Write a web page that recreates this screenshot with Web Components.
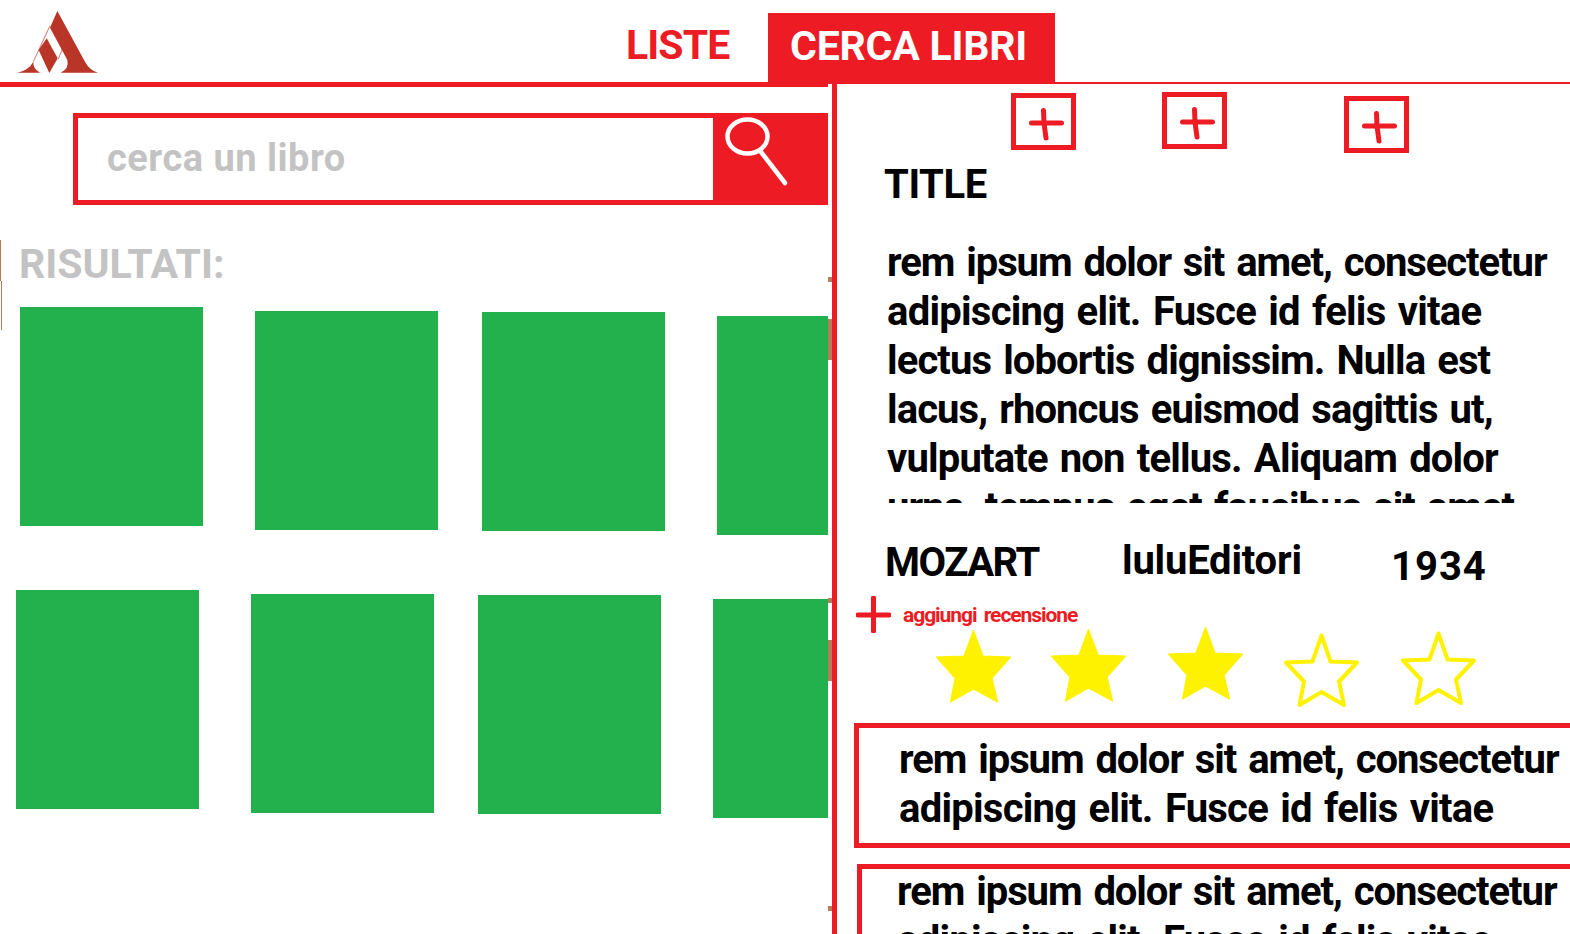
<!DOCTYPE html>
<html lang="it">
<head>
<meta charset="utf-8">
<title>Cerca libri</title>
<style>
  html, body { margin: 0; height: 100%; overflow: hidden; background: #fff; }
  body { font-family: Roboto, "Liberation Sans", sans-serif; }
</style>
</head>
<body>
<book-app></book-app>

<script>
(function () {
  const RED = "#ed1c24";
  const GREEN = "#22b14c";
  const BROWN = "#b97a57";
  const GREY = "#c3c3c3";

  function define(name, css, html, setup) {
    customElements.define(name, class extends HTMLElement {
      constructor() {
        super();
        this.attachShadow({ mode: "open" });
      }
      connectedCallback() {
        this.shadowRoot.innerHTML = `<style>${css}</style>${typeof html === "function" ? html(this) : html}`;
        if (setup) setup(this);
      }
    });
  }

  // each line has its own tracking, the source font is narrower than Roboto
  function lines(list) {
    return list.map(([text, ls]) => `<div style="letter-spacing:${ls}px">${text}</div>`).join("");
  }

  define("app-header", `
    :host { display: flex; height: 82px; flex: none; }
    svg { display: block; width: 95px; height: 75px; margin: 5px 0 0 10px; flex: none; }
    .liste { margin: 0 0 0 521px; width: 142px; color: ${RED}; font: 700 41px/91px Roboto, sans-serif; letter-spacing: -0.9px; flex: none; }
    .tab { margin-top: 13px; width: 265px; height: 69px; padding-left: 22px; background: ${RED}; color: #fff; font: 700 41px/66px Roboto, sans-serif; letter-spacing: -0.2px; white-space: nowrap; flex: none; }
  `, `
    <svg viewBox="0 0 285 225" aria-label="logo">
      <g fill="#b83527">
        <path d="M142 18 L225 170 Q238 195 264 203 H152 Q178 192 172 165 L120 68 Z"/>
        <path d="M110 100 L143 160 L118 204 L86 135 Z"/>
        <path d="M22 203 Q56 196 70 170 Q68 190 90 203 Z"/>
      </g>
      <path d="M120 62 L70 170 M157 132 L145 162" stroke="#b83527" stroke-width="2" fill="none"/>
    </svg>
    <div class="liste">LISTE</div>
    <div class="tab">CERCA LIBRI</div>
  `);

  define("header-rule", `
    :host { display: flex; height: 5px; flex: none; }
    .thick { width: 828px; background: ${RED}; flex: none; }
    .thin { flex: 1; height: 2px; background: ${RED}; }
    .stub { width: 5px; height: 3px; margin: 2px 0 0 4px; background: ${RED}; }
  `, `<div class="thick"></div><div class="thin"><div class="stub"></div></div>`);

  define("search-box", `
    :host { display: flex; height: 92px; margin: 26px 0 0 73px; }
    .field { border: 5px solid ${RED}; border-right: 0; padding-left: 29px; width: 606px; color: ${GREY}; font: 700 38px/80px Roboto, sans-serif; letter-spacing: 0.5px; }
    .go { width: 115px; background: ${RED}; flex: none; }
    svg { display: block; width: 115px; height: 92px; }
  `, `
    <div class="field">cerca un libro</div>
    <div class="go">
      <svg viewBox="0 0 115 92" fill="none" stroke="#fff" stroke-width="4.5" stroke-linecap="round">
        <ellipse cx="34.5" cy="23.5" rx="20" ry="17"/>
        <path d="M48 39 L72 70"/>
      </svg>
    </div>
  `);

  define("book-cover", `
    :host { display: block; width: 183px; height: 219px; background: ${GREEN}; flex: none; }
  `, ``);

  define("cover-row", `
    :host { display: flex; align-items: flex-start; height: 283px; }
    ::slotted(book-cover:nth-child(2)) { margin: 4px 0 0 52px; }
    ::slotted(book-cover:nth-child(3)) { margin: 5px 0 0 44px; }
    ::slotted(book-cover:nth-child(4)) { margin: 9px 0 0 52px; }
  `, `<slot></slot>`);

  define("results-pane", `
    :host { display: block; width: 828px; flex: none; overflow: hidden;
      background:
        linear-gradient(${BROWN}, ${BROWN}) 0 153px / 1px 41px no-repeat,
        linear-gradient(${BROWN}, ${BROWN}) 1px 194px / 1px 49px no-repeat; }
    h2 { margin: 0; height: 102px; padding-left: 19px; color: ${GREY}; font: 700 41px/118px Roboto, sans-serif; }
    cover-row.first { padding-left: 20px; }
    cover-row.second { padding-left: 16px; }
  `, `
    <search-box></search-box>
    <h2>RISULTATI:</h2>
    <cover-row class="first"><book-cover></book-cover><book-cover></book-cover><book-cover></book-cover><book-cover></book-cover></cover-row>
    <cover-row class="second"><book-cover></book-cover><book-cover></book-cover><book-cover></book-cover><book-cover></book-cover></cover-row>
  `);

  define("pane-gutter", `
    :host { display: block; width: 4px; flex: none;
      background:
        linear-gradient(${BROWN}, ${BROWN}) 0 190px / 4px 5px no-repeat,
        linear-gradient(${BROWN}, ${BROWN}) 0 232px / 4px 41px no-repeat,
        linear-gradient(${BROWN}, ${BROWN}) 0 511px / 4px 5px no-repeat,
        linear-gradient(${BROWN}, ${BROWN}) 0 553px / 4px 41px no-repeat,
        linear-gradient(${BROWN}, ${BROWN}) 0 819px / 4px 5px no-repeat; }
  `, ``);

  define("add-box", `
    :host { display: block; width: 55px; height: 47px; border: 5px solid ${RED}; flex: none; }
    svg { display: block; width: 55px; height: 47px; }
  `, `
    <svg viewBox="5 5 55 47" fill="none" stroke="${RED}" stroke-width="5" stroke-linecap="round">
      <path d="M20.5 30 H50.5 M32.5 17.5 L33 30 L35 45"/>
    </svg>
  `);

  define("star-rating", `
    :host { display: flex; align-items: flex-start; height: 96px; padding-left: 99px; }
    svg { display: block; width: 75px; height: 73px; flex: none; overflow: visible; }
  `, () => {
    const pts = "37.5,0.5 47,26 74.5,27 56,48 61.5,72 37.5,59 14.5,72 19,48 0.5,27 28,26";
    const outline = "37.5,1.5 46.5,27.5 73,28.5 55,47.5 60,71 37.5,58 15.5,71 20,47.5 2,28.5 28.5,27.5";
    const stars = [[0, 3, 1], [40, 2, 1], [42, 0, 1], [41, 7, 0], [42, 5, 0]];
    return stars.map(([gap, top, full]) => `
      <svg viewBox="0 0 75 73" style="margin:${top}px 0 0 ${gap}px">
        ${full
          ? `<polygon points="${pts}" fill="#fff200" stroke="#fff200" stroke-width="1.2" stroke-linejoin="round"/>`
          : `<polygon points="${outline}" fill="none" stroke="#fff200" stroke-width="4" stroke-linejoin="round"/>`}
      </svg>`).join("");
  });

  define("review-card", `
    :host { display: block; width: 800px; height: 108px; padding: 7px 0 0 40px; border: 5px solid ${RED}; color: #000;
      font: 700 40px/49px Roboto, sans-serif; word-spacing: 3px; white-space: nowrap; }
  `, `<slot></slot>`);

  define("book-detail", `
    :host { display: block; flex: 1; min-width: 0; border-left: 5px solid ${RED}; overflow: hidden; color: #000; }
    .adds { display: flex; align-items: flex-start; height: 66px; padding-left: 174px; }
    .adds add-box:nth-child(1) { margin-top: 6px; }
    .adds add-box:nth-child(2) { margin: 5px 0 0 86px; }
    .adds add-box:nth-child(3) { margin: 9px 0 0 117px; }
    h1 { margin: 0; height: 85px; padding-left: 47px; font: 700 40px/64px Roboto, sans-serif; letter-spacing: -0.4px; }
    .plot { height: 265px; padding-left: 50px; overflow: hidden; font: 700 40px/49px Roboto, sans-serif; word-spacing: 3px; white-space: nowrap; }
    .meta { display: flex; align-items: flex-start; height: 93px; padding-left: 48px; font: 700 40px/60px Roboto, sans-serif; }
    .meta span:nth-child(1) { width: 237px; margin-top: 30px; letter-spacing: -1.5px; }
    .meta span:nth-child(2) { width: 269px; margin-top: 28px; letter-spacing: -0.2px; }
    .meta span:nth-child(3) { margin-top: 34px; letter-spacing: 1px; }
    .add-review { display: flex; align-items: flex-start; height: 31px; padding-left: 19px; color: ${RED}; font: 700 21px/38px Roboto, sans-serif; letter-spacing: -1.05px; word-spacing: 3px; }
    .add-review svg { display: block; width: 35px; height: 37px; margin-right: 12px; flex: none; }
    review-card.one { margin-left: 17px; }
    review-card.two { margin: 16px 0 0 20px; height: auto; padding: 0 0 0 35px; }
    review-card.two div:first-child { margin-top: -2px; }
  `, () => `
    <div class="adds"><add-box></add-box><add-box></add-box><add-box></add-box></div>
    <h1>TITLE</h1>
    <div class="plot">${lines([
      ["rem ipsum dolor sit amet, consectetur", -1.07],
      ["adipiscing elit. Fusce id felis vitae", -0.75],
      ["lectus lobortis dignissim. Nulla est", -0.9],
      ["lacus, rhoncus euismod sagittis ut,", -0.91],
      ["vulputate non tellus. Aliquam dolor", -0.84],
      ["urna, tempus eget faucibus sit amet", -0.97],
    ])}</div>
    <div class="meta"><span>MOZART</span><span>luluEditori</span><span>1934</span></div>
    <div class="add-review">
      <svg viewBox="0 0 35 37" fill="none" stroke="${RED}" stroke-width="5" stroke-linecap="round">
        <path d="M2 19 H33 M17.5 2 V35"/>
      </svg>
      <span>aggiungi recensione</span>
    </div>
    <star-rating></star-rating>
    <review-card class="one">${lines([
      ["rem ipsum dolor sit amet, consectetur", -1.07],
      ["adipiscing elit. Fusce id felis vitae", -0.75],
    ])}</review-card>
    <review-card class="two">${lines([
      ["rem ipsum dolor sit amet, consectetur", -1.07],
      ["adipiscing elit. Fusce id felis vitae", -0.75],
    ])}</review-card>
  `);

  define("book-app", `
    :host { display: flex; flex-direction: column; height: 934px; overflow: hidden; }
    .main { display: flex; flex: 1; min-height: 0; }
  `, `
    <app-header></app-header>
    <header-rule></header-rule>
    <div class="main">
      <results-pane></results-pane>
      <pane-gutter></pane-gutter>
      <book-detail></book-detail>
    </div>
  `);
})();
</script>
</body>
</html>
